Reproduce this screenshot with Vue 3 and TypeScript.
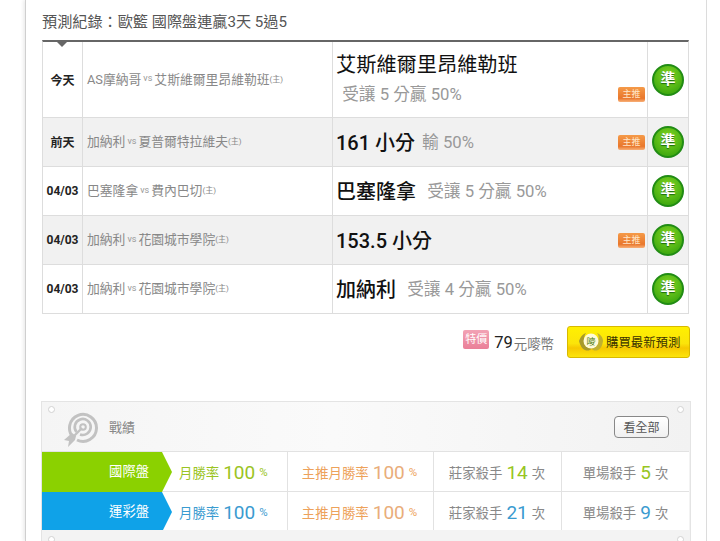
<script setup lang="ts">
interface Row {
  day: string
  home: string
  away: string
  pick: string
  note: string
  badge: boolean
  alt: boolean
  tall?: boolean
}
const rows: Row[] = [
  { day: '今天', home: 'AS摩納哥', away: '艾斯維爾里昂維勒班', pick: '艾斯維爾里昂維勒班', note: ' 受讓 5 分贏 50%', badge: true, alt: false, tall: true },
  { day: '前天', home: '加納利', away: '夏普爾特拉維夫', pick: '161 小分', note: '輸 50%', badge: true, alt: true },
  { day: '04/03', home: '巴塞隆拿', away: '費內巴切', pick: '巴塞隆拿', note: ' 受讓 5 分贏 50%', badge: false, alt: false },
  { day: '04/03', home: '加納利', away: '花園城市學院', pick: '153.5 小分', note: '', badge: true, alt: true },
  { day: '04/03', home: '加納利', away: '花園城市學院', pick: '加納利', note: ' 受讓 4 分贏 50%', badge: false, alt: false },
]
const stats = [
  { name: '國際盤', cls: 'green', month: '100', main: '100', bank: '14', single: '5' },
  { name: '運彩盤', cls: 'blue', month: '100', main: '100', bank: '21', single: '9' },
]
</script>

<template>
  <div class="page">
    <h2 class="title">預測紀錄：歐籃 國際盤連贏3天 5過5</h2>
    <div class="table">
      <i class="notch"></i>
      <div v-for="(r, i) in rows" :key="i" class="row" :class="{ alt: r.alt, tall: r.tall }">
        <div class="day">{{ r.day }}</div>
        <div class="match">{{ r.home }}<span class="vs">vs</span>{{ r.away }}<span class="host">(主)</span></div>
        <div class="pick" :class="{ stack: r.tall }">
          <span class="pick-name">{{ r.pick }}</span>
          <span v-if="r.note" class="note">{{ r.note }}</span>
          <span v-if="r.badge" class="badge">主推</span>
        </div>
        <div class="mark"><span class="ball">準</span></div>
      </div>
    </div>
    <div class="buy">
      <span class="sale">特價</span>
      <span class="price">79</span>
      <span class="unit">元嘜幣</span>
      <button class="buy-btn">
        <svg class="leaf" width="26" height="22" viewBox="0 0 26 22">
          <path d="M1 10C3 5 5 3 8 2c-2 3-2 5-1 8 1 4 4 6 7 7-2 3-5 3-7 2-3-1-5-5-6-9Z" fill="#a79a2a" />
          <path d="M25 9c-1-4-3-6-6-7 2 3 2 5 1 8-1 4-4 6-7 7 2 3 5 3 7 2 3-1 5-6 5-10Z" fill="#c0b030" />
          <ellipse cx="13" cy="10" rx="7.5" ry="7.5" fill="#fffbd6" />
          <text x="13" y="14" text-anchor="middle" class="leaf-t">嘜</text>
        </svg>
        <span>購買最新預測</span>
      </button>
    </div>
    <section class="panel">
      <i class="dot tl"></i><i class="dot tr"></i>
      <header class="panel-head">
        <svg class="target" width="36" height="36" viewBox="0 0 36 36" fill="none" stroke="#c2c2c2">
          <path d="M10.5 25.5A13.5 13.5 0 1 1 14 28" stroke-width="3" />
          <path d="M13.5 20A8 8 0 1 1 17 22.5" stroke-width="2.6" />
          <circle cx="20" cy="15" r="2.8" stroke-width="2" />
          <path d="M19 16 9 26" stroke-width="2.4" />
          <path d="M9 21 1 28l5 1-1 6 7-7 1-4Z" fill="#c2c2c2" stroke="none" />
        </svg>
        <span class="panel-title">戰績</span>
        <button class="all">看全部</button>
      </header>
      <div v-for="s in stats" :key="s.name" class="stat" :class="s.cls">
        <div class="tag">{{ s.name }}<i class="arrow"></i></div>
        <div class="cell c1"><span class="lab">月勝率</span> <b>{{ s.month }}</b> <small>%</small></div>
        <div class="cell c2"><span class="lab">主推月勝率</span> <b>{{ s.main }}</b> <small>%</small></div>
        <div class="cell c3"><span>莊家殺手</span> <b>{{ s.bank }}</b> <span>次</span></div>
        <div class="cell c4"><span>單場殺手</span> <b>{{ s.single }}</b> <span>次</span></div>
      </div>
      <footer class="panel-foot"><i class="dot bl"></i><i class="dot br"></i></footer>
    </section>
  </div>
</template>

<style>
html, body { margin: 0; background: #fff; overflow: hidden; }
</style>

<style scoped>
.page {
  box-sizing: border-box;
  width: 682px;
  height: 541px;
  margin-left: 25px;
  padding: 0 16px;
  border-left: 1px solid #cfcfcf;
  border-right: 1px solid #dcdcdc;
  box-shadow: -2px 0 3px #eee;
  overflow: hidden;
  font-family: Roboto, "Noto Sans CJK TC", sans-serif;
  color: #333;
}
.title {
  box-sizing: border-box;
  margin: 0;
  padding-top: 12px;
  height: 40px;
  font-size: 15.15px;
  line-height: 20px;
  font-weight: 400;
  color: #555;
}
.table {
  position: relative;
  width: 647px;
  border-top: 2px solid #666;
  border-left: 1px solid #ddd;
  border-right: 1px solid #ddd;
  box-sizing: border-box;
}
.notch {
  position: absolute;
  left: 14px;
  top: 0;
  border: 5px solid transparent;
  border-top-color: #666;
  border-bottom: 0;
}
.row {
  display: grid;
  grid-template-columns: 39px 250px 315px 1fr;
  height: 49px;
  box-sizing: border-box;
  border-bottom: 1px solid #ddd;
}
.row.tall { height: 76px; }
.row.alt { background: #f1f1f1; }
.row > div { display: flex; align-items: center; min-width: 0; }
.row > div + div { border-left: 1px solid #ddd; }
.day {
  justify-content: center;
  padding-bottom: 1px;
  font-size: 12px;
  font-weight: 700;
  color: #222;
}
.match {
  padding: 0 0 3px 4px;
  font-size: 12.8px;
  color: #888;
  white-space: nowrap;
}
.vs { font-size: 9px; margin: 0 2px; color: #999; }
.host { font-size: 8px; }
.pick {
  position: relative;
  padding: 0 0 2px 3px;
  gap: 7px;
  white-space: pre;
}
.pick-name {
  font-size: 20px;
  font-weight: 500;
  color: #111;
}
.note { font-size: 16.7px; color: #999; }
.pick.stack {
  flex-direction: column;
  align-items: flex-start;
  justify-content: flex-start;
  gap: 3px;
  padding-top: 7px;
  box-sizing: border-box;
}
.pick.stack .pick-name { font-weight: 400; font-size: 20.2px; }
.pick.stack .note { padding-left: 2px; }
.badge {
  position: absolute;
  right: 2px;
  top: 50%;
  margin-top: -7.5px;
  width: 27px;
  height: 15px;
  background: linear-gradient(#f59a48, #e9772c 75%, #f8b078);
  border-radius: 2px;
  color: #ffe6c8;
  font-size: 9px;
  line-height: 15px;
  text-align: center;
}
.pick.stack .badge { top: auto; bottom: 15px; margin: 0; }
.mark { justify-content: center; }
.ball {
  width: 32px;
  height: 32px;
  box-sizing: border-box;
  border-radius: 50%;
  border: 2px solid #218c14;
  background: radial-gradient(circle at 50% 35%, #86d824, #42ab10 75%);
  color: #fff;
  font-size: 15px;
  font-weight: 700;
  line-height: 27px;
  text-align: center;
  text-shadow: 0 1px 1px #1a6a0c;
}
.buy {
  display: flex;
  align-items: center;
  justify-content: flex-end;
  width: 648px;
  height: 32px;
  margin-top: 12px;
}
.sale {
  width: 26px;
  height: 19px;
  margin-right: 5px;
  margin-top: -6px;
  background: linear-gradient(#f2a3b5, #ea7f98);
  border-radius: 2px;
  color: #fff;
  font-size: 11px;
  line-height: 19px;
  text-align: center;
}
.price { font-size: 16.5px; color: #222; margin-right: 1px; margin-top: 1px; }
.unit { font-size: 13.4px; color: #777; margin-right: 13px; margin-top: 1px; }
.buy-btn {
  display: flex;
  align-items: center;
  width: 123px;
  height: 32px;
  padding: 0 0 0 10px;
  gap: 2px;
  border: 1px solid #d8b900;
  border-radius: 3px;
  background: linear-gradient(#fff000 0, #fbe40a 55%, #f6c800 70%, #fce40c 100%);
  font-family: inherit;
  font-size: 12.4px;
  color: #3a3200;
  white-space: nowrap;
  box-sizing: border-box;
}
.leaf { flex: none; }
.leaf-t { font-size: 9px; fill: #4b7a12; }
.panel {
  position: relative;
  width: 650px;
  height: 160px;
  margin: 43px 0 0 -1px;
  background: #f3f3f3;
  border: 1px solid #e4e4e4;
  box-sizing: border-box;
}
.dot {
  position: absolute;
  width: 7px;
  height: 7px;
  box-sizing: border-box;
  border-radius: 50%;
  background: #fff;
  border: 1px solid #d2d2d2;
}
.tl { left: 6px; top: 4px; }
.tr { right: 6px; top: 4px; }
.bl { left: 6px; top: 6px; }
.br { right: 6px; top: 6px; }
.panel-head {
  display: flex;
  align-items: center;
  height: 49px;
  padding-left: 21px;
  background: linear-gradient(90deg, #f5f5f5, #fafafa 45%, #f2f2f2);
}
.target { margin-top: 7px; flex: none; }
.panel-title { margin-left: 10px; font-size: 13px; color: #888; }
.all {
  margin-left: auto;
  margin-right: 21px;
  width: 55px;
  height: 22px;
  padding: 0;
  border: 1px solid #888;
  border-radius: 4px;
  background: linear-gradient(#fff, #f0f0f0);
  font-family: inherit;
  font-size: 12px;
  color: #555;
}
.stat {
  display: grid;
  grid-template-columns: 120px 125px 146px 128px 1fr;
  height: 40px;
  margin-right: 1px;
  background: #fff;
  border-top: 1px solid #e2e2e2;
  box-sizing: border-box;
}
.stat.blue { height: 39px; }
.tag {
  position: relative;
  padding-right: 13px;
  color: #fff;
  font-size: 13.3px;
  line-height: 40px;
  text-align: right;
}
.green .tag { background: #8bd100; }
.blue .tag { background: #0fa2e8; }
.arrow {
  position: absolute;
  left: 100%;
  top: 0;
  bottom: 0;
  width: 10px;
  clip-path: polygon(0 0, 100% 50%, 0 100%);
}
.green .arrow { background: #8bd100; }
.blue .arrow { background: #0fa2e8; }
.cell {
  display: flex;
  align-items: center;
  justify-content: center;
  gap: 4px;
  font-size: 13.4px;
  color: #888;
  white-space: nowrap;
}
.c2, .c3, .c4 { border-left: 1px solid #e2e2e2; }
.cell b { font-weight: 400; font-size: 19px; }
.cell small { font-size: 11.5px; }
.c1 { justify-content: flex-start; padding-left: 17px; }
.c2 { padding-right: 2px; }
.c3 { padding-right: 1px; }
.green .c1 { color: #9ac423; }
.blue .c1 { color: #3a9bd0; }
.c2 { color: #eda25b; }
.c2 b { color: #e9ad7a; }
.green .c3 b, .green .c4 b { color: #97c51f; }
.blue .c3 b, .blue .c4 b { color: #3a9bd0; }
.panel-foot { position: relative; height: 20px; background: #f3f3f3; }
</style>
